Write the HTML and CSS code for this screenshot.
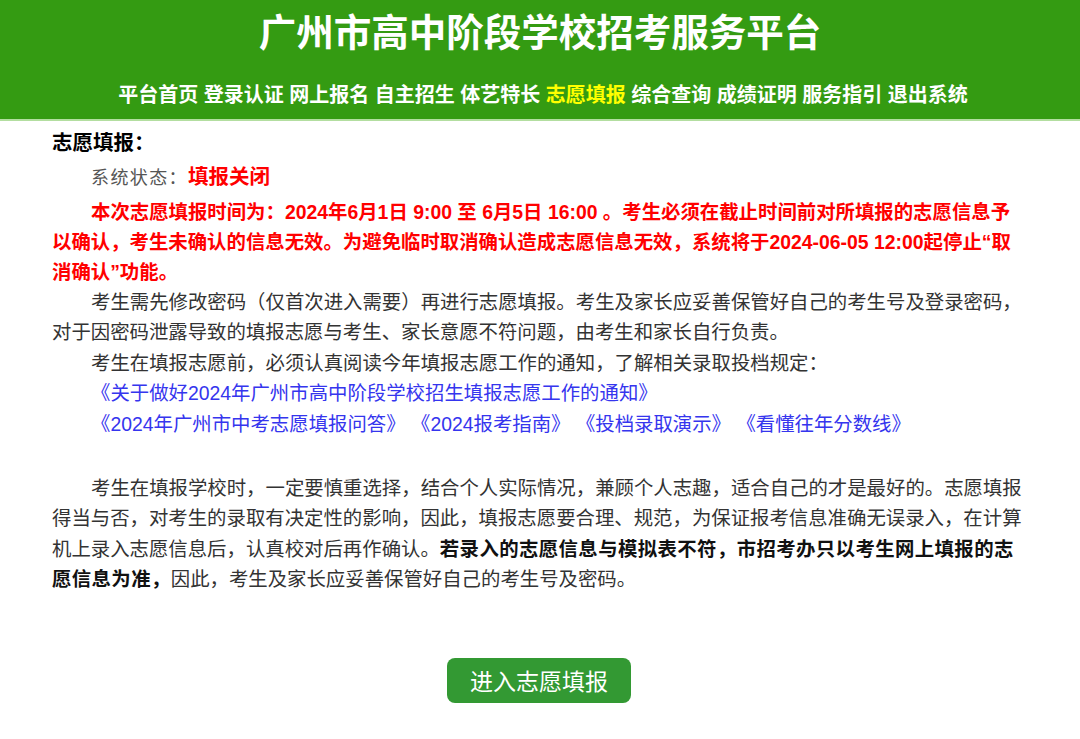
FILE: index.html
```html
<!DOCTYPE html>
<html lang="zh-CN">
<head>
<meta charset="utf-8">
<title>广州市高中阶段学校招考服务平台</title>
<link rel="stylesheet" href="styles.css">
</head>
<body>
<header class="header">
  <h1 class="title">广州市高中阶段学校招考服务平台</h1>
  <nav class="nav">
    <a class="nav-item">平台首页</a>
    <a class="nav-item">登录认证</a>
    <a class="nav-item">网上报名</a>
    <a class="nav-item">自主招生</a>
    <a class="nav-item">体艺特长</a>
    <a class="nav-item active">志愿填报</a>
    <a class="nav-item">综合查询</a>
    <a class="nav-item">成绩证明</a>
    <a class="nav-item">服务指引</a>
    <a class="nav-item">退出系统</a>
  </nav>
</header>
<main class="main">
  <h2 class="heading">志愿填报：</h2>
  <p class="status"><span class="status-label">系统状态：</span><span class="status-value">填报关闭</span></p>
  <p class="notice">本次志愿填报时间为：2024年6月1日 9:00 至 6月5日 16:00 。考生必须在截止时间前对所填报的志愿信息予以确认，考生未确认的信息无效。为避免临时取消确认造成志愿信息无效，系统将于2024-06-05 12:00起停止“取消确认”功能。</p>
  <p class="para">考生需先修改密码（仅首次进入需要）再进行志愿填报。考生及家长应妥善保管好自己的考生号及登录密码，对于因密码泄露导致的填报志愿与考生、家长意愿不符问题，由考生和家长自行负责。</p>
  <p class="para">考生在填报志愿前，必须认真阅读今年填报志愿工作的通知，了解相关录取投档规定：</p>
  <p class="links"><a class="link">《关于做好2024年广州市高中阶段学校招生填报志愿工作的通知》</a></p>
  <p class="links"><a class="link">《2024年广州市中考志愿填报问答》</a> <a class="link">《2024报考指南》</a> <a class="link">《投档录取演示》</a> <a class="link">《看懂往年分数线》</a></p>
  <p class="para para-gap">考生在填报学校时，一定要慎重选择，结合个人实际情况，兼顾个人志趣，适合自己的才是最好的。志愿填报得当与否，对考生的录取有决定性的影响，因此，填报志愿要合理、规范，为保证报考信息准确无误录入，在计算机上录入志愿信息后，认真校对后再作确认。<strong class="strong">若录入的志愿信息与模拟表不符，市招考办只以考生网上填报的志</strong><strong class="strong">愿信息为准，</strong>因此，考生及家长应妥善保管好自己的考生号及密码。</p>
  <div class="actions">
    <button class="btn" type="button">进入志愿填报</button>
  </div>
</main>
</body>
</html>
```

FILE: styles.css
```css
html, body {
  margin: 0;
  padding: 0;
  background: #ffffff;
}

body {
  font-family: "Liberation Sans", "Noto Sans CJK SC", sans-serif;
  color: #333333;
}

.header {
  background: #349b12;
  border-bottom: 2px solid #b3dea0;
  height: 119px;
  display: flex;
  flex-direction: column;
  align-items: center;
}

.title {
  margin: 11px 0 0 0;
  font-size: 37.5px;
  line-height: 44px;
  font-weight: bold;
  color: #ffffff;
}

.nav {
  margin-top: 25px;
  display: flex;
  justify-content: center;
  gap: 5.5px;
  padding-left: 6px;
}

.nav-item {
  font-size: 20px;
  line-height: 30px;
  font-weight: bold;
  color: #ffffff;
  text-decoration: none;
}

.nav-item.active {
  color: #ffff00;
}

.main {
  width: 975px;
  margin-left: 52px;
  padding-top: 5px;
  font-size: 19.4px;
}

.heading {
  margin: 0;
  font-size: 20.5px;
  line-height: 34px;
  font-weight: bold;
  color: #000000;
}

.status {
  margin: 0;
  line-height: 34px;
  text-indent: 39px;
}

.status-label {
  color: #555555;
  font-size: 18px;
  letter-spacing: 1.4px;
}

.status-value {
  color: #ff0000;
  font-weight: bold;
  font-size: 20.5px;
}

.notice {
  margin: 0;
  padding-top: 1.5px;
  line-height: 30px;
  font-weight: bold;
  color: #ff0000;
  text-indent: 39px;
}

.para {
  margin: 0;
  line-height: 30.5px;
  color: #333333;
  text-indent: 39px;
}

.para-gap {
  margin-top: 33.5px;
}

.strong {
  font-weight: bold;
  color: #111111;
  letter-spacing: 0.4px;
}

.links {
  margin: 0;
  line-height: 30.5px;
  text-indent: 39px;
}

.link {
  color: #3535ee;
  text-decoration: none;
}

.actions {
  display: flex;
  justify-content: center;
  margin-top: 63px;
  padding-right: 1px;
}

.btn {
  width: 184px;
  height: 45px;
  border: none;
  border-radius: 8px;
  background: #339933;
  color: #ffffff;
  font-family: "Liberation Sans", "Noto Sans CJK SC", sans-serif;
  font-size: 23px;
  padding: 0;
  cursor: pointer;
}
```
